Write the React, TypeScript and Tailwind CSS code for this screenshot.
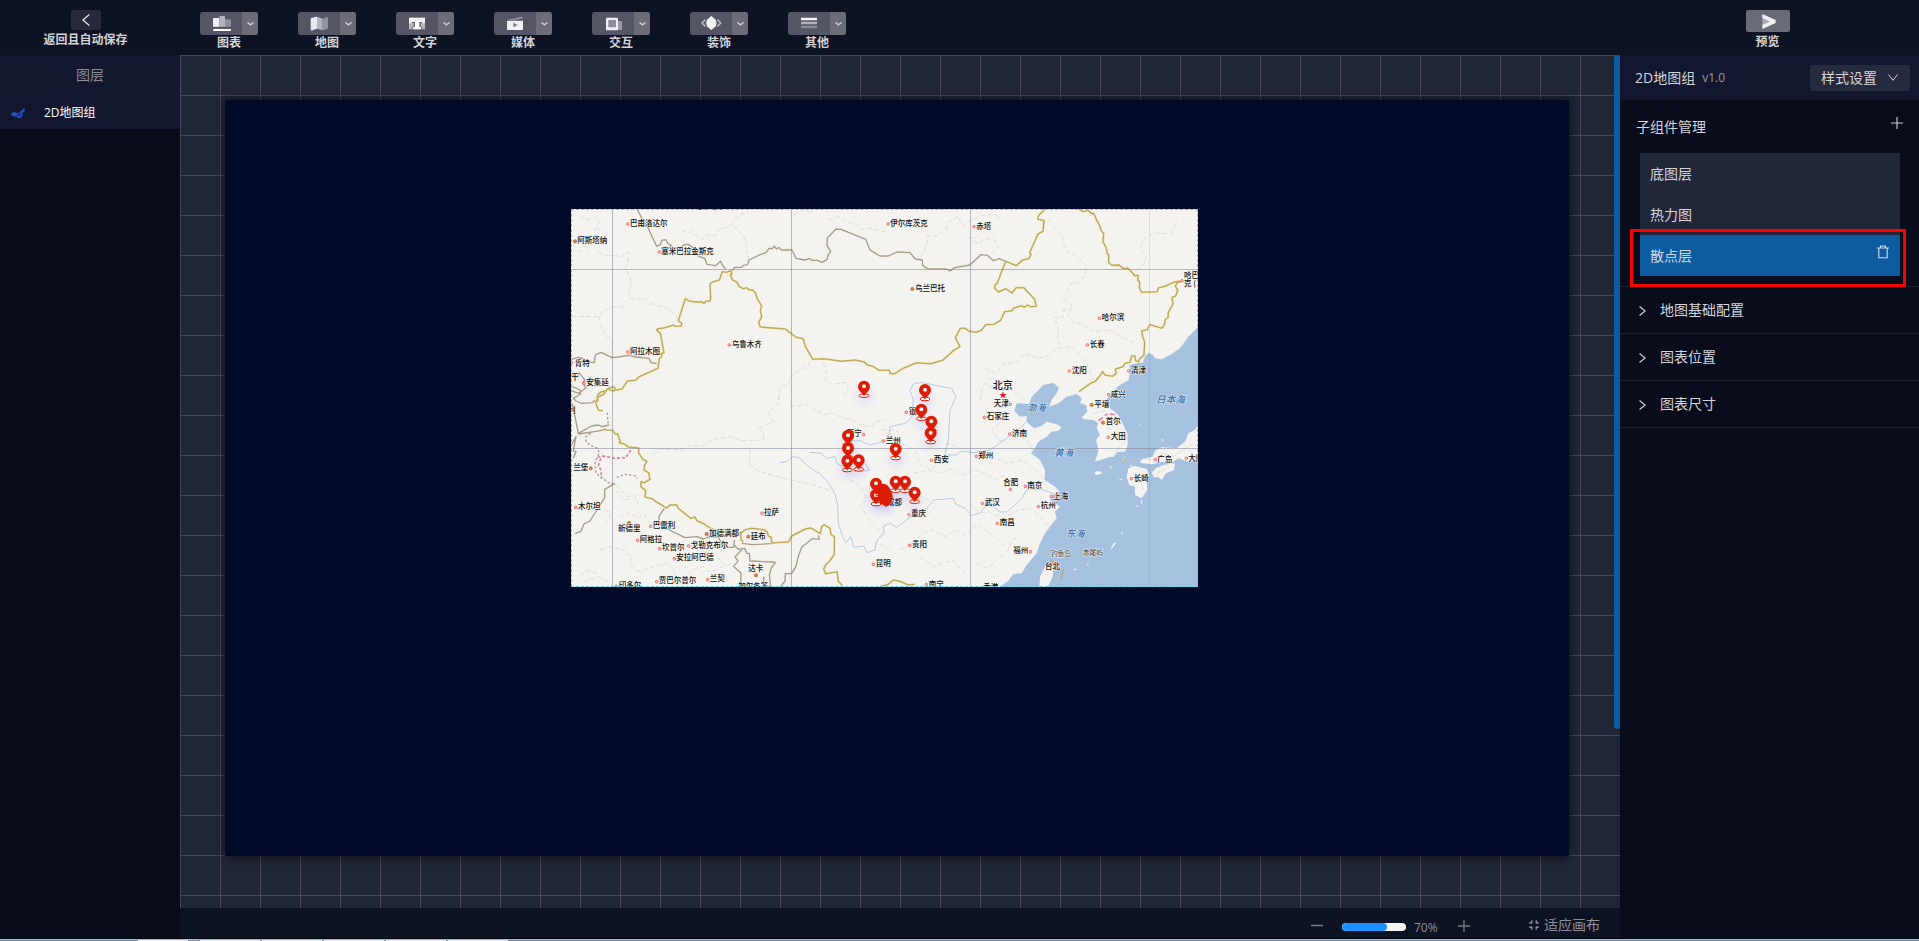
import React from "react";

type Point = [number, number];

interface PlaceLabel {
  x: number;
  y: number;
  text: string;
  dot?: Point;
  capital?: boolean;
  size?: number;
}

const GOLD_WEST = [
  "M113 605 L113 585 L121 577 L138 572 L148 563 L162 561 L168 571 L187 566 L202 543 L226 541 L238 530 L294 505 L298 475 L306 470 L303 460 L312 459 L303 410 L302 402 L290 390 L294 386 L315 383 L340 375 L345 379 L364 378 L365 370 L355 362 L376 296 L385 302 L404 306 L425 305 L432 310 L438 304 L449 304 L452 296 L450 252 L458 246 L478 240 L487 215 L500 217 L512 212 L516 222 L511 225 L518 240 L530 246 L537 259 L550 266 L560 263 L568 270 L577 269 L586 278 L592 297 L605 318 L601 331 L605 350 L596 367 L601 381 L676 387 L709 412 L730 416 L735 437 L758 478 L790 476 L845 484 L886 480 L913 486 L922 495 L937 498 L957 511 L988 511 L990 520 L1002 522 L1030 505 L1070 488 L1112 491 L1148 481 L1180 452 L1200 440 L1186 413 L1201 385 L1216 385 L1227 394 L1250 397 L1265 390 L1277 374 L1301 373 L1322 361 L1334 335 L1356 332 L1360 325 L1385 317 L1393 322 L1403 315 L1411 320 L1429 319 L1424 298 L1391 263 L1369 263 L1356 279 L1337 266 L1316 276 L1304 265 L1305 255 L1311 251 L1337 184 L1369 197 L1388 180 L1406 176 L1413 163 L1409 158 L1434 102 L1449 94 L1452 62 L1433 57 L1436 46 L1455 28",
];

const GOLD_EAST = [
  "M1597 28 L1610 35 L1625 31 L1636 42 L1641 40 L1650 61 L1656 70 L1665 94 L1671 100 L1669 125 L1678 142 L1682 162 L1686 164 L1686 188 L1696 196 L1717 195 L1732 207 L1743 204 L1756 217 L1764 227 L1775 226 L1773 240 L1779 246 L1778 264 L1785 277 L1832 275 L1835 264 L1857 258 L1883 246 L1908 242 L1892 248 L1886 258 L1893 271 L1887 288 L1876 292 L1879 312 L1865 337 L1864 353 L1856 358 L1854 372 L1846 385 L1810 374 L1801 389 L1785 393 L1788 410 L1794 426 L1792 466 L1779 476 L1776 486 L1766 481 L1765 468 L1755 468 L1750 487 L1735 490 L1729 500 L1706 507 L1708 521 L1697 529 L1675 525 L1668 515 L1660 527 L1645 545 L1635 548 L1597 575",
];

const GOLD_SOUTH = [
  "M168 0 L160 3 L142 -3 L131 13 L111 23 L112 30 L106 35 L115 60 L129 62 M131 115 L138 120 L158 121 L166 132 L173 131 L177 145 L181 152 L178 158 L195 163 L205 171 L236 174 L236 188 L248 208 L261 214 L254 225 L252 240 L266 248 L270 268 L253 278 L243 275 L243 290 L257 302 L255 321 L276 326 L288 335 L320 354 L330 345 L350 345 L355 355 L392 385 L405 381 L411 392 L431 401 L439 407 L455 417 L480 424 L520 430 L542 430 L556 419 L575 415 L612 419 L622 426 L625 438 L633 441 L636 459 L686 455 L695 438 L738 416 L753 414 L781 431 L785 410 L792 404 L810 415 L813 433 L823 440 L823 493 L810 512 L797 525 L791 537 L797 551 L831 545 L835 574 L847 586",
  "M542 425 L543 448 L550 456",
  "M960 590 L985 583 L1000 570 L1020 574 L1045 585 L1065 583",
];

const BROWN_NORTH = [
  "M233 30 L248 60 L262 80 L290 139 L301 134 L305 121 L317 119 L324 131 L334 135 L328 143 L360 145 L372 134 L385 133 L407 148 L414 168 L434 175 L441 193 L466 197 L482 184 L487 195 L497 208",
  "M517 212 L523 202 L545 202 L550 196 L563 194 L567 180 L600 164 L618 158 L627 145 L637 146 L642 138 L650 147 L657 142 L664 150 L696 150 L708 175 L735 180 L748 176 L758 181 L772 181 L787 187 L801 178 L804 165 L812 155 L801 136 L802 114 L828 87 L843 88 L917 118 L930 150 L943 158 L960 168 L985 168 L1011 156 L1050 158 L1066 177 L1087 180 L1088 197 L1103 206 L1158 207 L1170 213 L1184 203 L1230 195 L1248 178 L1263 164 L1282 166 L1300 182 L1318 176 L1336 184",
  "M34 478 L55 472 L73 477 L85 486 L103 488 L106 465 L123 457 L156 473 L175 471 L205 466 L228 471 L267 475 L273 488 L290 491",
  "M34 524 L51 532 L57 518 L75 540 L67 548 L78 563 L56 580 L34 572",
];

const BROWN_SOUTH = [
  "M34 -10 L45 -7 L60 0 L62 12 L40 25 L48 33 L65 40 L98 38 L104 30 M37 40 L44 75 L55 130 L95 108 L115 105 L125 110 L148 105 M55 132 L108 124 L138 118 M34 165 L48 140 L40 182 L48 185 L40 205 M165 280 L134 298 L134 323 L90 393 L72 402 L63 424 L45 430",
  "M313 355 L298 377 L295 400 L334 423 L375 443 L411 440 L430 447 L446 441 L475 442 L492 472 L521 472 L523 450 M545 460 L578 464 L634 461",
  "M523 466 L535 478 L554 475 L560 490 L568 490 L570 513 L636 516 L646 517 L634 534 L628 555 L632 590 L610 585 L612 560 M545 480 L525 500 L534 514 L520 529 L543 549 L542 575 L552 590",
  "M662 590 L675 573 L676 551 L695 551 L709 527 L713 505 L725 472 L740 460 L756 446 L778 448 L775 436",
];

const PROVINCES = [
  "M60 48 L80 60 L100 50 L117 60 L112 78 L120 92 L106 85 L104 108 L118 113 L110 130 L90 115 L65 110",
  "M50 152 L63 156 M68 135 L78 142 L90 160 M115 156 L135 166 L170 168 L184 170 L205 157 L202 190 L196 205 L207 225 L215 250 L206 270 L208 295 L258 298 L270 310 L315 323 L345 342 L357 365",
  "M34 349 L118 350 L125 338 L150 322 L200 320 M118 350 L120 370 L132 390 L130 402 L157 420 L157 470",
  "M365 90 L380 98 L398 95 L425 118 L440 105 L465 108 L478 88 L510 80 L520 60 L545 42 L565 35 M520 78 L535 88 L550 110 L562 128 L555 145 L563 162 L565 178",
  "M700 45 L728 32 L760 36 M805 60 L835 50 L855 65 L890 72 L905 90 L930 84 L975 95",
  "M750 485 L745 498 L718 510 L690 530 L688 552 L660 560 L655 600 M790 488 L800 520 L795 540 L815 553 L860 547 L865 565 L850 590",
];

const PROVINCES_EAST = [
  "M1122 175 L1142 130 L1140 110 L1168 108 L1198 90 L1205 65 L1235 50 L1245 78 L1275 62 L1300 48 L1340 42 L1370 58",
  "M1280 125 L1300 130 L1312 115 L1345 120 L1355 140 L1335 158 M1265 115 L1290 110",
  "M1504 58 L1530 90 L1548 108 L1552 132 L1565 160 L1585 163 L1605 182 L1620 202 L1615 230 L1595 248 L1573 250 L1560 275 L1545 292 L1570 310 L1578 330 L1555 325 L1545 355 L1522 352 L1535 380 L1532 420 L1545 440",
  "M1770 210 L1790 195 L1800 165 L1780 145 L1795 115 L1820 98 L1875 102 L1890 60",
  "M1545 325 L1570 350 L1580 370 L1600 370 L1640 395 L1690 390 L1720 410 L1770 430",
  "M1315 505 L1350 520 L1370 490 L1410 488 L1430 460 L1470 475 L1500 470 L1530 445 L1575 440 L1620 490 L1640 540",
  "M1300 600 L1308 560 L1330 535 L1375 550 L1400 540 L1412 545",
];

const PROVINCES_SOUTH = [
  "M280 195 L300 177 L370 180 L385 168 L430 168 L455 148 L520 140 L540 152 L610 150 L612 130 L595 115 L640 95 L625 65 L655 40 L658 10",
  "M570 178 L568 225 L600 245 L690 270 L745 280 L815 303",
  "M690 50 L740 43 L765 60 L790 75 L810 68 L840 80 L875 90 L900 105 L935 110 L945 95 L980 90",
  "M170 285 L185 305 L205 320 L225 315 L235 345 M135 360 L150 365 L150 385 L138 395 M165 300 L190 330 L215 325 M180 380 L200 365 L235 385 L250 370 L270 400 L295 400",
  "M120 480 L150 470 L190 480 L215 500 L210 525 L235 545 L280 530 L320 520 L345 540 L340 560 L370 565 L395 540 L430 530 L450 545 L490 530 L515 520",
  "M60 555 L85 540 L110 550 M70 575 L115 560 L145 575 M240 425 L265 440 L290 435 M375 450 L355 480 L370 500 M430 485 L470 500 L495 525",
  "M845 230 L870 270 L900 285 L920 330 L900 345 L930 395 L965 430 L950 460 L990 480",
  "M965 120 L1010 120 L1030 165 L1065 180 L1080 225 L1115 240 L1150 200 L1160 160 L1200 175",
  "M1060 250 L1110 240 L1145 250 L1170 235 L1205 255 L1245 240 L1275 250 L1310 270 L1335 255",
  "M1020 480 L1060 460 L1085 430 L1120 420 L1155 440 L1185 420 L1220 435 L1250 400 L1290 430 L1330 465",
  "M1230 340 L1260 370 L1285 365 L1330 385 L1375 360 L1410 355 L1440 375 L1470 420",
  "M1250 520 L1285 535 L1320 500 L1345 480 L1355 450 L1380 440 M1285 -15 L1320 5 L1350 -5 L1390 30",
  "M1320 100 L1295 120 L1315 150 L1340 155 M1360 130 L1400 150 L1430 200 M1290 195 L1340 220 L1390 210 L1440 250 L1460 290",
  "M1020 260 L1030 300 L1085 320 L1130 345 L1105 370 L1040 385",
  "M1080 500 L1120 530 L1180 510 L1220 560",
  "M1640 110 L1665 125 L1690 160 L1665 190 M1600 70 L1640 60",
];

const RIVERS = [
  "M660 218 L680 215 L700 199 L718 204 L748 232 L780 252 L805 278 L825 312 L833 345 L835 400 L848 440 L858 458 L872 440 L882 472 L912 468 L920 488 L945 480 L948 455 L972 430 L970 408 L990 400 L1010 412 L1050 382 L1095 362 L1120 330 L1180 325 L1188 343 L1215 355 L1235 377 L1260 368 L1280 345 L1300 350 L1320 366 L1340 366 L1365 345 L1385 325 L1400 300 L1440 297 L1480 310",
  "M748 187 L785 190 L800 205 L825 200 L830 220 L860 235 L905 245 L928 240 L915 220 L900 205 M870 153 L900 152 L930 165 L960 158 L985 148 L990 110 L1035 100 L1055 83 L1060 30 L1050 0 L1062 -20 L1090 -22 L1135 -12 L1175 -5 L1187 20 L1180 40 L1170 60 L1165 150 L1155 195 L1190 195 L1205 183 L1240 188 L1290 180 L1340 145 L1385 110 L1400 95",
];

const SEA =
  "M955 -190 L925 -160 L900 -125 L870 -105 L845 -92 L825 -95 L818 -106 L805 -112 L795 -100 L788 -82 L770 -80 L748 -75 L750 -52 L746 -30 L715 -12 L700 5 L682 25 L676 45 L700 62 L715 75 L730 105 L742 130 L743 165 L735 185 L712 186 L700 202 L690 200 L662 210 L645 215 L655 185 L652 165 L648 150 L660 135 L650 115 L655 100 L640 90 L612 88 L605 82 L622 65 L618 45 L600 40 L606 25 L590 12 L560 20 L535 40 L508 50 L515 30 L530 10 L537 -7 L520 -22 L490 -15 L470 5 L455 20 L447 42 L410 40 L403 62 L420 80 L440 78 L440 95 L462 115 L485 108 L500 95 L530 103 L545 112 L535 122 L515 125 L500 140 L475 155 L464 175 L453 190 L480 210 L495 240 L494 270 L525 290 L540 305 L520 312 L510 330 L540 350 L525 365 L530 385 L510 410 L495 430 L480 460 L470 490 L440 525 L425 550 L400 552 L385 572 L360 590 L955 590 Z";

const ISLANDS = [
  "M955 103 L945 120 L925 130 L915 155 L890 175 L845 172 L825 182 L818 200 L785 208 L780 218 L815 223 L850 215 L870 222 L895 205 L925 215 L955 210 Z",
  "M745 235 L765 228 L800 237 L808 255 L800 278 L802 300 L785 325 L765 315 L765 290 L748 285 L740 262 Z",
  "M815 248 L828 235 L850 225 L885 220 L882 240 L858 250 L845 270 L835 262 L822 262 Z",
  "M643 249 L652 243 L665 245 L664 251 L648 255 Z",
  "M512 515 L521 530 L518 560 L503 592 L478 592 L480 560 L495 530 Z",
  "M733 202 L737 204 L732 220 L728 218 Z",
  "M715 270 L728 265 L725 271 Z M770 345 L775 349 L768 350 Z M782 330 L788 333 L784 345 Z M845 146 L850 149 L846 155 Z M778 100 L782 103 L778 106 Z",
  "M700 460 L709 458 L700 470 L690 480 Z M724 425 L729 430 L725 435 Z M620 520 L628 526 L620 526 Z M580 538 L590 535 L584 543 Z M690 228 L696 232 L691 238 Z M750 228 L757 224 L754 232 Z",
];

const NORTH_LABELS: PlaceLabel[] = [
  { x: 210, y: 78, text: "巴甫洛达尔", dot: [203, 72] },
  { x: 52, y: 130, text: "阿斯塔纳", dot: [45, 124], capital: true },
  { x: 304, y: 162, text: "塞米巴拉金斯克", dot: [298, 156] },
  { x: 210, y: 462, text: "阿拉木图", dot: [203, 456] },
  { x: 515, y: 441, text: "乌鲁木齐", dot: [508, 435] },
  { x: 44, y: 498, text: "肯特", dot: [34, 488] },
  { x: 34, y: 540, text: "干" },
  { x: 79, y: 556, text: "安集延", dot: [72, 550] },
  { x: 405, y: 27, text: "巴尔瑙尔" },
  { x: 991, y: 78, text: "伊尔库茨克", dot: [984, 72] },
  { x: 1249, y: 86, text: "赤塔", dot: [1242, 80] },
  { x: 1065, y: 273, text: "乌兰巴托", dot: [1057, 267], capital: true },
  { x: 1872, y: 235, text: "哈巴" },
  { x: 1872, y: 258, text: "克 (", dot: [1866, 242] },
  { x: 1625, y: 361, text: "哈尔滨", dot: [1618, 355] },
  { x: 1589, y: 441, text: "长春", dot: [1582, 435] },
  { x: 1535, y: 519, text: "沈阳", dot: [1528, 513] },
  { x: 1713, y: 519, text: "清津", dot: [1706, 513] },
  { x: 1652, y: 590, text: "咸兴", dot: [1646, 584] },
  { x: 1298, y: 566, text: "北京", size: 30 },
];

const SOUTH_LABELS: PlaceLabel[] = [
  { x: 24, y: 68, text: "列" },
  { x: 40, y: 240, text: "兰堡", dot: [92, 235], capital: true },
  { x: 54, y: 357, text: "木尔坦", dot: [47, 352] },
  { x: 174, y: 423, text: "新德里", dot: [207, 399], capital: true },
  { x: 278, y: 414, text: "巴雷利", dot: [272, 409] },
  { x: 239, y: 457, text: "阿格拉", dot: [233, 451] },
  { x: 306, y: 481, text: "坎普尔", dot: [299, 476] },
  { x: 392, y: 473, text: "戈勒克布尔", dot: [386, 468] },
  { x: 447, y: 438, text: "加德满都", dot: [440, 432], capital: true },
  { x: 572, y: 446, text: "廷布", dot: [565, 440], capital: true },
  { x: 349, y: 511, text: "安拉阿巴德", dot: [343, 506] },
  { x: 565, y: 544, text: "达卡", dot: [588, 556], capital: true },
  { x: 449, y: 574, text: "兰契", dot: [443, 569] },
  { x: 296, y: 580, text: "贾巴尔普尔", dot: [290, 575] },
  { x: 176, y: 593, text: "印多尔", dot: [169, 589] },
  { x: 535, y: 597, text: "加尔各答" },
  { x: 612, y: 375, text: "拉萨", dot: [606, 370] },
  { x: 947, y: 528, text: "昆明", dot: [940, 523] },
  { x: 860, y: 139, text: "西宁", dot: [911, 134] },
  { x: 977, y: 158, text: "兰州", dot: [970, 153] },
  { x: 1046, y: 73, text: "银川", dot: [1039, 67] },
  { x: 1121, y: 217, text: "西安", dot: [1114, 211] },
  { x: 981, y: 344, text: "成都" },
  { x: 1053, y: 379, text: "重庆", dot: [1047, 374] },
  { x: 1056, y: 471, text: "贵阳", dot: [1049, 466] },
  { x: 1106, y: 590, text: "南宁", dot: [1099, 584] },
  { x: 1270, y: 600, text: "香港" },
  { x: 1301, y: 49, text: "天津", dot: [1351, 43] },
  { x: 1280, y: 87, text: "石家庄", dot: [1273, 82] },
  { x: 1356, y: 138, text: "济南", dot: [1349, 132] },
  { x: 1255, y: 205, text: "郑州", dot: [1249, 199] },
  { x: 1330, y: 286, text: "合肥", dot: [1351, 298] },
  { x: 1402, y: 294, text: "南京", dot: [1396, 289] },
  { x: 1480, y: 326, text: "上海", dot: [1474, 319] },
  { x: 1442, y: 355, text: "杭州", dot: [1435, 350] },
  { x: 1274, y: 345, text: "武汉", dot: [1267, 340] },
  { x: 1319, y: 406, text: "南昌", dot: [1312, 400] },
  { x: 1360, y: 490, text: "福州", dot: [1411, 485] },
  { x: 1455, y: 538, text: "台北", dot: [1475, 517] },
  { x: 1603, y: 50, text: "平壤", dot: [1595, 45], capital: true },
  { x: 1637, y: 103, text: "首尔", dot: [1629, 98], capital: true },
  { x: 1652, y: 147, text: "大田", dot: [1645, 142] },
  { x: 1792, y: 215, text: "广岛", dot: [1786, 209] },
  { x: 1885, y: 213, text: "大阪", dot: [1879, 205] },
  { x: 1721, y: 272, text: "长崎", dot: [1714, 266] },
];

const SEA_LABELS: PlaceLabel[] = [
  { x: 1401, y: 64, text: "渤海", size: 28 },
  { x: 1483, y: 199, text: "黄海", size: 28 },
  { x: 1518, y: 440, text: "东海", size: 28 },
  { x: 1788, y: 39, text: "日本海", size: 29 },
];

const PINS: Point[] = [
  [102, 50], [285, 60], [274, 119], [304, 155], [302, 189], [54, 197], [54, 235],
  [52, 273], [86, 271], [197, 237], [138, 341], [197, 335], [225, 335], [254, 368],
  [138, 375],
];

const CLUSTER: Point[] = [
  [160, 359], [152, 366], [164, 364], [156, 374], [168, 372], [170, 378], [160, 380], [167, 384],
];

function Labels({ items }: { items: PlaceLabel[] }) {
  return (
    <g fontWeight="500">
      {items.map((p) => (
        <g key={p.text + p.x}>
          {p.dot && p.capital && (
            <circle cx={p.dot[0]} cy={p.dot[1]} r="5" fill="#d9842f" stroke="#a86a48" strokeWidth="2" />
          )}
          {p.dot && !p.capital && (
            <rect x={p.dot[0] - 3.5} y={p.dot[1] - 3.5} width="7" height="7" rx="2" fill="#ffd6d2" stroke="#ee6464" strokeWidth="3" />
          )}
          <text x={p.x} y={p.y} fontSize={p.size ?? 22.5} fill="#0c0c0c" stroke="#f8f7f4" strokeWidth="3" paintOrder="stroke">
            {p.text}
          </text>
        </g>
      ))}
    </g>
  );
}

function Lines({ paths, stroke, width, dash }: { paths: string[]; stroke: string; width: number; dash?: string }) {
  return (
    <g fill="none" stroke={stroke} strokeWidth={width} strokeDasharray={dash} strokeLinejoin="round">
      {paths.map((d) => (
        <path key={d} d={d} />
      ))}
    </g>
  );
}

function Pin({ at }: { at: Point }) {
  return (
    <g transform={`translate(${at[0]} ${at[1]})`}>
      <ellipse cx="0" cy="27" rx="15" ry="5.5" fill="#fff" stroke="#dc1c05" strokeWidth="3" />
      <path d="M0 29 C-5 18 -18 12 -18 0 A18 18 0 0 1 18 0 C18 12 5 18 0 29Z" fill="#dc1c05" />
      <circle cx="0" cy="-1" r="6" fill="#f6f3f2" />
    </g>
  );
}

function ScatterMap() {
  return (
    <svg className="block h-full w-full font-['Noto_Sans_CJK_SC',sans-serif]" viewBox="0 0 1881 1134" preserveAspectRatio="none">
      <defs>
        <radialGradient id="heat">
          <stop offset="0" stopColor="#7a6cf0" stopOpacity="0.17" />
          <stop offset="1" stopColor="#8f86f5" stopOpacity="0" />
        </radialGradient>
      </defs>
      <rect width="1881" height="1134" fill="#f4f3f0" />
      <g transform="translate(927 543)">
        <path d={SEA} fill="#a6c1df" />
        <g fill="#f4f3f0">
          {ISLANDS.map((d) => (
            <path key={d} d={d} />
          ))}
        </g>
        <path d="M790 205 L820 210 L845 190 L880 200 L910 180 L940 160 M760 250 L780 270 L790 300 M830 250 L860 235" fill="none" stroke="#d5d5d5" strokeWidth="2" />
        <path d="M550 538 L543 567 M737 204 L730 219 M598 5 L607 -3" stroke="#b7ab73" strokeWidth="4" fill="none" />
        <path d="M655 92 L668 83 M674 76 L684 72 M690 72 L704 74" stroke="#d87396" strokeWidth="4" />
      </g>
      <g transform="translate(-33 -27)">
        <Lines paths={PROVINCES} stroke="#d2d2d1" width={2} dash="15 7" />
      </g>
      <g transform="translate(-73 -27)">
        <Lines paths={PROVINCES_EAST} stroke="#d2d2d1" width={2} dash="15 7" />
      </g>
      <g transform="translate(-33 543)">
        <Lines paths={PROVINCES_SOUTH} stroke="#d2d2d1" width={2} dash="15 7" />
        <Lines paths={RIVERS} stroke="#b4cde5" width={3} />
        <path d="M92 130 L78 140 L78 155 L90 165 L112 175 L118 190 L105 215 L108 250 L145 278 L165 283 M142 68 L143 85 L145 105 M170 262 L195 253 L228 258 L230 266" fill="none" stroke="#ab9a86" strokeWidth="4" strokeDasharray="7 6" />
        <path d="M112 202 L130 198 L165 205 L198 203 L212 180 M122 205 L115 228 L123 240 L124 265" fill="none" stroke="#d66c90" strokeWidth="4" strokeDasharray="9 6" />
        <Lines paths={BROWN_SOUTH} stroke="#a89b88" width={4} />
        <Lines paths={GOLD_SOUTH} stroke="#e3d691" width={6} />
        <Lines paths={GOLD_SOUTH} stroke="#b8a455" width={3.2} />
      </g>
      <g transform="translate(-33 -27)">
        <Lines paths={BROWN_NORTH} stroke="#a89b88" width={4} />
        <Lines paths={GOLD_WEST} stroke="#e3d691" width={6} />
        <Lines paths={GOLD_WEST} stroke="#b8a455" width={3.2} />
      </g>
      <g transform="translate(-73 -27)">
        <Lines paths={GOLD_EAST} stroke="#e3d691" width={6} />
        <Lines paths={GOLD_EAST} stroke="#b8a455" width={3.2} />
      </g>
      <path d="M124.500 0V1134 M661.500 0V1134 M1198.500 0V1134 M0 181.500H1881 M0 718.500H1881" stroke="#7e8195" strokeOpacity="0.55" strokeWidth="3" />
      <path d="M1735.500 0V1134" stroke="#7e8195" strokeOpacity="0.2" strokeWidth="3" />
      <g transform="translate(-33 -27)">
        <Labels items={NORTH_LABELS} />
      </g>
      <g transform="translate(-33 543)">
        <Labels items={SOUTH_LABELS} />
        <g fontStyle="italic" fontWeight="500">
          {SEA_LABELS.map((p) => (
            <text key={p.text} x={p.x} y={p.y} fontSize={p.size} fill="#3f72ad" stroke="#d4e3f2" strokeWidth="4" paintOrder="stroke">
              {p.text}
            </text>
          ))}
        </g>
        <g fontSize="20.500" fontWeight="500" fill="#4b4f53" stroke="#e9eff5" strokeWidth="3" paintOrder="stroke">
          <text x="1472" y="499">钓鱼岛</text>
          <text x="1568" y="495">赤尾屿</text>
        </g>
        <path d="M1329 4 L1331.800 12 L1340 12 L1333.500 17 L1336 25 L1329 20 L1322 25 L1324.500 17 L1318 12 L1326.200 12Z" fill="#f0122d" />
      </g>
      <g transform="translate(777 483)">
        {PINS.map((p, i) => (
          <circle key={i} cx={p[0]} cy={p[1] + 28} r="42" fill="url(#heat)" />
        ))}
        <circle cx="168" cy="400" r="50" fill="url(#heat)" />
        <circle cx="168" cy="400" r="40" fill="url(#heat)" />
        {PINS.map((p, i) => (
          <Pin key={i} at={p} />
        ))}
        {CLUSTER.map((p, i) => (
          <path key={i} transform={`translate(${p[0]} ${p[1]})`} d="M0 26 C-5 22 -18 12 -18 0 A18 18 0 0 1 18 0 C18 12 10 26 0 26Z" fill="#dc1c05" />
        ))}
        <path d="M132 373H144M132 379H144" stroke="#f6d6d0" strokeWidth="2.500" />
      </g>
    </svg>
  );
}

const TOOLS: { label: string; icon: React.ReactNode }[] = [
  {
    label: "图表",
    icon: (
      <>
        <path d="M39 21q0-3 3-3h16v26H39Z" fill="#eff0f2" />
        <path d="M58 15q0-3 3-3h11q3 0 3 3v29H58Z" fill="#b4b5be" />
        <path d="M75 22h15q3 0 3 3v19H75Z" fill="#8e8f9c" />
        <path d="M40 51h53v6H40Z" fill="#fff" />
      </>
    ),
  },
  {
    label: "地图",
    icon: (
      <>
        <path d="M38 20Q38 17 57 14V50Q48 51 42 56Q38 56 38 52Z" fill="#e9eaec" />
        <path d="M57 14L74 20V55L57 50Z" fill="#b4b5be" />
        <path d="M74 20L87 15Q90 15 90 19V48Q90 51 74 55Z" fill="#92939f" />
      </>
    ),
  },
  {
    label: "文字",
    icon: (
      <>
        <path d="M39 17H87V52H39Z" fill="#b9bac1" />
        <path d="M39 17H87V34H39Z" fill="#f1f1f3" />
        <path d="M47 30H57V45H50V52H47V44H53V34H47ZM69 30H79V34H74V44H79V52H76V45H69Z" fill="#62636f" />
        <path d="M57 26H70V46H75V52H52V46H57Z" fill="#fff" />
      </>
    ),
  },
  {
    label: "媒体",
    icon: (
      <>
        <path d="M39 26H87V51q0 3-3 3H42q-3 0-3-3Z" fill="#eff0f1" />
        <path d="M43 23L84 14L87 19L52 25Z" fill="#9b9ca7" />
        <path d="M58 32L71 39L58 46Z" fill="#787984" />
      </>
    ),
  },
  {
    label: "交互",
    icon: (
      <>
        <path d="M76 27H87q3 0 3 3V54H76Z" fill="#9a9ba6" />
        <path d="M42 20q0-3 3-3H75q3 0 3 3V55H42Z" fill="#eff0f1" />
        <path d="M49 24H72V46H49Z" fill="#8b8c97" />
      </>
    ),
  },
  {
    label: "装饰",
    icon: (
      <>
        <g fill="none" stroke="#b5b6bf" strokeWidth="5">
          <path d="M46 23L36 33L46 43M82 23L92 33L82 43" />
        </g>
        <path d="M47 29H81V37H47Z" fill="#a9aab4" />
        <path d="M64 12L78 24V43L64 54L50 43V24Z" fill="#f1f1f3" />
      </>
    ),
  },
  {
    label: "其他",
    icon: (
      <>
        <path d="M39 17H87V25H39Z" fill="#f3f3f4" />
        <path d="M39 29H87V37H39Z" fill="#b1b2bb" />
        <path d="M39 41H87V49H39Z" fill="#8c8d99" />
      </>
    ),
  },
];

function ToolButton({ label, icon }: { label: string; icon: React.ReactNode }) {
  return (
    <div className="flex w-[58px] flex-col items-center">
      <button className="flex h-[23px] w-full overflow-hidden rounded-[3px] bg-[#555665]">
        <svg className="h-[23px] w-[42px]" viewBox="0 0 126 69">{icon}</svg>
        <span className="flex h-full w-4 items-center justify-center bg-[#6b6c78]">
          <svg className="h-1 w-[7px]" viewBox="0 0 7 4" fill="none" stroke="#cfd0d5" strokeWidth="1.400">
            <path d="M.5 .5L3.500 2.800L6.500 .5" />
          </svg>
        </span>
      </button>
      <span className="text-xs leading-4 font-bold text-[#d2d3d7]">{label}</span>
    </div>
  );
}

function LeftSidebar() {
  return (
    <aside className="flex w-[180px] shrink-0 flex-col bg-[#090c1b]">
      <div className="flex h-[55px] flex-col items-center bg-[#0e1324] pt-[10px] pr-[9px]">
        <button className="flex h-5 w-[30px] items-center justify-center rounded-[2px] bg-[#26293a]">
          <svg className="h-3 w-2" viewBox="0 0 8 12" fill="none" stroke="#e2e3e6" strokeWidth="1.300">
            <path d="M7.300 .5L1 6L7.300 11.500" />
          </svg>
        </button>
        <span className="pt-px text-xs leading-[18px] font-bold whitespace-nowrap text-[#d2d3d7]">返回且自动保存</span>
      </div>
      <div className="h-10 bg-[#12162f] text-center text-sm leading-10 text-[#8b8d99]">图层</div>
      <div className="flex h-[34px] items-center bg-[#12162f] pl-[11px] text-xs text-white">
        <svg className="mt-px mr-[19px] h-3 w-[14px]" viewBox="0 0 42 36">
          <path d="M1 18L10 15L18 18L26 16L32 10L41 3V12L34 19L36 25L30 32L22 34L16 29L8 28L1 25Z" fill="#2b50bd" />
          <path d="M18 18L30 16L33 25L26 30L16 28Z" fill="#1d3a95" />
        </svg>
        <span className="pt-px">2D地图组</span>
      </div>
    </aside>
  );
}

function ZoomBar() {
  return (
    <div className="flex h-[30px] shrink-0 items-center justify-end bg-[#0e1324] pr-5 pb-px text-[#8d8f99]">
      <svg className="mt-[6px] h-3 w-3" viewBox="0 0 12 12"><path d="M0 5.500H12" stroke="#777a86" strokeWidth="1.500" /></svg>
      <div className="mt-[9px] ml-[19px] h-2 w-16 overflow-hidden rounded-full bg-[#f5f5f5]">
        <div className="h-full w-[45px] rounded-full bg-[#1890ff]" />
      </div>
      <span className="mt-[11px] ml-2 w-[43px] text-xs">70%</span>
      <svg className="mt-[6px] ml-px h-3 w-3" viewBox="0 0 12 12"><path d="M0 6H12M6 0V12" stroke="#777a86" strokeWidth="1.300" /></svg>
      <svg className="mt-[4px] ml-[59px] h-[10px] w-[10px]" viewBox="0 0 10 10" fill="none" stroke="#a5a7b0" strokeWidth="1.200">
        <path d="M2.800 .2V2.800H.2M7.200 .2V2.800H9.800M2.800 9.800V7.200H.2M7.200 9.800V7.200H9.800" />
      </svg>
      <span className="mt-[5px] ml-[5px] text-sm leading-5">适应画布</span>
    </div>
  );
}

const LAYERS = ["底图层", "热力图", "散点层"];
const SECTIONS = ["地图基础配置", "图表位置", "图表尺寸"];

function RightPanel() {
  return (
    <aside className="flex w-[299px] shrink-0 flex-col bg-[#090c1b] text-sm text-[#d5d6da]">
      <div className="flex h-[55px] flex-col items-center bg-[#0e1324] pt-[10px] pr-[3px]">
        <button className="flex h-[22px] w-11 items-center justify-center rounded-[2px] bg-[#696b77]">
          <svg className="ml-[2px] h-[15px] w-[14px]" viewBox="0 0 42 45">
            <path d="M1 10L24 22.500L1 35Z" fill="#a9aab2" />
            <path d="M1 0L41 18V27L1 45V33L24 22.500L1 12Z" fill="#f0f0f2" />
          </svg>
        </button>
        <span className="pt-px pr-px text-xs leading-[18px] font-bold text-[#d2d3d7]">预览</span>
      </div>
      <div className="flex h-[45px] items-center bg-[#12162f] pr-[9px] pl-[15px]">
        <span>2D地图组</span>
        <span className="mt-px ml-[7px] text-xs text-[#999ba6]">v1.0</span>
        <button className="ml-auto flex h-[26px] w-[100px] items-center rounded-[2px] bg-[#262a3f] pl-[11px]">
          样式设置
          <svg className="ml-[11px] h-[7px] w-[10px]" viewBox="0 0 10 7" fill="none" stroke="#d5d6da"><path d="M.5 .5L5 6.300L9.500 .5" /></svg>
        </button>
      </div>
      <div className="flex h-[53px] items-center justify-between pr-4 pl-4">
        <span>子组件管理</span>
        <svg className="mb-[7px] h-3 w-3" viewBox="0 0 12 12"><path d="M0 6H12M6 0V12" stroke="#c5c6cb" strokeWidth="1.200" /></svg>
      </div>
      <div className="relative mr-[19px] ml-5 bg-[#222639]">
        {LAYERS.map((name, i) => (
          <div key={name} className={i === 2 ? "flex h-[41px] items-center justify-between bg-[#0d5ca2] pr-[11px] pl-[10px]" : "flex h-[41px] items-center pl-[10px]"}>
            <span>{name}</span>
            {i === 2 && (
              <svg className="mb-[7px] h-[14px] w-3" viewBox="0 0 12 14" fill="none" stroke="#d5dde6" strokeWidth="1.100">
                <path d="M0 3H12M3.500 3V1H8.500V3M1.800 3V12.800H10.200V3" />
              </svg>
            )}
          </div>
        ))}
        <div className="pointer-events-none absolute top-[76px] -left-[10px] h-[58px] w-[276px] border-3 border-[#ff0000]" />
      </div>
      <div className="mt-[10px] border-t border-[#1f2231]">
        {SECTIONS.map((name) => (
          <div key={name} className="flex h-[47px] items-center border-b border-[#1f2231] pl-[19px]">
            <svg className="mt-[2px] h-[10px] w-[7px]" viewBox="0 0 7 10" fill="none" stroke="#d5d6da" strokeWidth="1.100"><path d="M.5 .5L6.200 5L.5 9.500" /></svg>
            <span className="ml-[14px]">{name}</span>
          </div>
        ))}
      </div>
    </aside>
  );
}

export default function App() {
  return (
    <div className="flex h-[941px] w-[1919px] flex-col overflow-hidden bg-[#090c1b] font-['Open_Sans','Noto_Sans_CJK_SC',sans-serif]">
      <div className="flex min-h-0 flex-1">
        <LeftSidebar />
        <main className="flex w-[1440px] shrink-0 flex-col">
          <header className="flex h-[55px] shrink-0 gap-10 bg-[#0e1324] pt-3 pl-5">
            {TOOLS.map((tool) => (
              <ToolButton key={tool.label} label={tool.label} icon={tool.icon} />
            ))}
          </header>
          <div className="flex min-h-0 flex-1 justify-between overflow-hidden bg-[#212538] bg-[linear-gradient(to_right,#474858_1px,transparent_1px),linear-gradient(to_bottom,#474858_1px,transparent_1px)] bg-[size:40px_40px]">
            <div className="mt-[45px] ml-[45px] h-[756px] w-[1344px] bg-[#020a27] pt-[109px] pl-[346px] shadow-[0_0_10px_0_rgba(0,0,0,0.7)]">
              <div className="relative h-[378px] w-[627px] overflow-hidden">
                <ScatterMap />
                <div className="absolute inset-0 border border-dashed border-[#3fdcf2]" />
              </div>
            </div>
            <div className="h-[674px] w-[6px] rounded-full bg-[#0d5ca2]" />
          </div>
          <ZoomBar />
        </main>
        <RightPanel />
      </div>
      <div className="flex h-[3px] shrink-0 flex-col bg-[#05070d] pt-px">
        <div className="flex h-[2px] border-t border-[#a5bccb] bg-[#6387a6]">
          <div className="ml-[138px] flex h-px gap-[2px]">
            <div className="w-[50px] bg-[#e9eef3]" />
            <div className="w-[8px] bg-[#7e9db5]" />
            {[0, 1, 2, 3, 4].map((n) => (
              <div key={n} className="w-[60px] bg-[#dfe8f0]" />
            ))}
          </div>
        </div>
      </div>
    </div>
  );
}
